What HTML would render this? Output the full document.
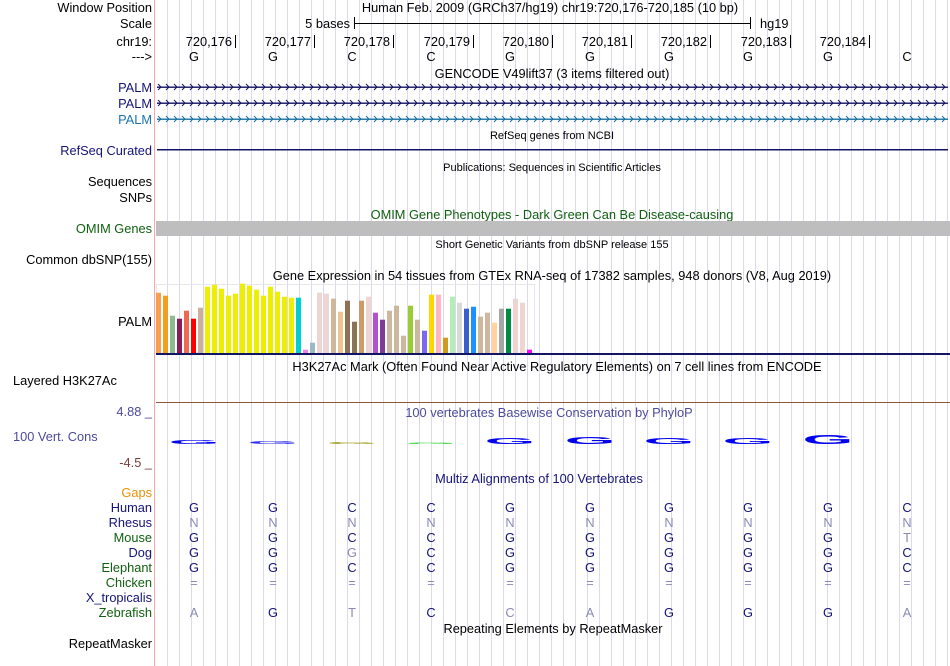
<!DOCTYPE html>
<html><head><meta charset="utf-8"><style>
html,body{margin:0;padding:0;background:#fff;width:950px;height:666px;overflow:hidden}
svg{display:block}
text{font-family:"Liberation Sans",sans-serif;font-size:12.8px}
.s{font-size:11px}
</style></head><body>
<svg width="950" height="666" xmlns="http://www.w3.org/2000/svg">
<defs>
<pattern id="grid" x="167" y="0" width="12" height="666" patternUnits="userSpaceOnUse">
<rect x="0" y="0" width="1" height="666" fill="#dcd8f2"/>
</pattern>
</defs>
<rect x="156" y="0" width="794" height="666" fill="url(#grid)"/>
<rect x="154" y="0" width="1" height="666" fill="#f8a8a8"/>

<g fill="#000" text-anchor="end">
<text x="152" y="12">Window Position</text>
<text x="152" y="28">Scale</text>
<text x="152" y="46">chr19:</text>
<text x="152" y="61">---&gt;</text>
</g>
<text x="550" y="12" text-anchor="middle">Human Feb. 2009 (GRCh37/hg19)   chr19:720,176-720,185 (10 bp)</text>
<text x="350" y="28" text-anchor="end">5 bases</text>
<rect x="354" y="17" width="1" height="12" fill="#000"/>
<rect x="354" y="23" width="396" height="1" fill="#000"/>
<rect x="750" y="17" width="1" height="12" fill="#000"/>
<text x="760" y="28">hg19</text>
<g text-anchor="end">
<text x="232" y="46">720,176</text><rect x="235" y="35" width="1" height="13"/>
<text x="311" y="46">720,177</text><rect x="314" y="35" width="1" height="13"/>
<text x="390" y="46">720,178</text><rect x="393" y="35" width="1" height="13"/>
<text x="470" y="46">720,179</text><rect x="473" y="35" width="1" height="13"/>
<text x="549" y="46">720,180</text><rect x="552" y="35" width="1" height="13"/>
<text x="628" y="46">720,181</text><rect x="631" y="35" width="1" height="13"/>
<text x="707" y="46">720,182</text><rect x="710" y="35" width="1" height="13"/>
<text x="787" y="46">720,183</text><rect x="790" y="35" width="1" height="13"/>
<text x="866" y="46">720,184</text><rect x="869" y="35" width="1" height="13"/>
</g>
<g text-anchor="middle">
<text x="194" y="61">G</text><text x="273" y="61">G</text><text x="352" y="61">C</text><text x="431" y="61">C</text><text x="510" y="61">G</text><text x="590" y="61">G</text><text x="669" y="61">G</text><text x="748" y="61">G</text><text x="828" y="61">G</text><text x="907" y="61">C</text>
</g>
<text x="552" y="78" text-anchor="middle">GENCODE V49lift37 (3 items filtered out)</text>

<text x="152" y="92" text-anchor="end" fill="#141478">PALM</text>
<text x="152" y="108" text-anchor="end" fill="#141478">PALM</text>
<text x="152" y="124" text-anchor="end" fill="#1a74b0">PALM</text>
<g id="palm"></g>

<text class="s" x="552" y="139" text-anchor="middle">RefSeq genes from NCBI</text>
<text x="152" y="155" text-anchor="end" fill="#141478">RefSeq Curated</text>
<rect x="157" y="149" width="791" height="1.5" fill="#141464"/>
<text class="s" x="552" y="171" text-anchor="middle">Publications: Sequences in Scientific Articles</text>
<text x="152" y="186" text-anchor="end">Sequences</text>
<text x="152" y="202" text-anchor="end">SNPs</text>
<text x="552" y="219" text-anchor="middle" fill="#106010">OMIM Gene Phenotypes - Dark Green Can Be Disease-causing</text>
<text x="152" y="233" text-anchor="end" fill="#106010">OMIM Genes</text>
<rect x="156" y="221" width="794" height="15" fill="#bebebe"/>
<text class="s" x="552" y="248" text-anchor="middle">Short Genetic Variants from dbSNP release 155</text>
<text x="152" y="264" text-anchor="end">Common dbSNP(155)</text>
<text x="552" y="280" text-anchor="middle">Gene Expression in 54 tissues from GTEx RNA-seq of 17382 samples, 948 donors (V8, Aug 2019)</text>
<text x="152" y="326" text-anchor="end">PALM</text>
<rect x="156.5" y="284.5" width="378" height="69" fill="none" stroke="#e6e6ec"/>
<g id="bars"></g>
<rect x="156" y="353" width="794" height="2" fill="#141464"/>

<text x="557" y="371" text-anchor="middle">H3K27Ac Mark (Often Found Near Active Regulatory Elements) on 7 cell lines from ENCODE</text>
<text x="13" y="385">Layered H3K27Ac</text>
<rect x="156" y="402" width="794" height="1" fill="#8b5a3c"/>

<text x="152" y="416" text-anchor="end" fill="#4b4b9b">4.88 _</text>
<text x="13" y="441" fill="#4b4b9b">100 Vert. Cons</text>
<text x="152" y="467" text-anchor="end" fill="#7b3c3c">-4.5 _</text>
<text x="549" y="417" text-anchor="middle" fill="#4b4b9b">100 vertebrates Basewise Conservation by PhyloP</text>
<g id="logos" text-anchor="middle" font-weight="bold"></g>

<text x="539" y="483" text-anchor="middle" fill="#141478">Multiz Alignments of 100 Vertebrates</text>
<g text-anchor="end">
<text x="152" y="497" fill="#e8900a">Gaps</text>
<text x="152" y="512" fill="#141478">Human</text>
<text x="152" y="527" fill="#141478">Rhesus</text>
<text x="152" y="542" fill="#106010">Mouse</text>
<text x="152" y="557" fill="#141478">Dog</text>
<text x="152" y="572" fill="#106010">Elephant</text>
<text x="152" y="587" fill="#106010">Chicken</text>
<text x="152" y="602" fill="#141478">X_tropicalis</text>
<text x="152" y="617" fill="#106010">Zebrafish</text>
<text x="152" y="648" fill="#000">RepeatMasker</text>
</g>
<g id="maf" text-anchor="middle"></g>
<text x="553" y="633" text-anchor="middle">Repeating Elements by RepeatMasker</text>
</svg>
<script>
var NS="http://www.w3.org/2000/svg";
function el(n,a,p){var e=document.createElementNS(NS,n);for(var k in a)e.setAttribute(k,a[k]);p.appendChild(e);return e;}
var pg=document.getElementById("palm");
[[87,"#141464"],[103,"#141464"],[119,"#1a6fa0"]].forEach(function(r){
 el("rect",{x:157,y:r[0]-0.5,width:791,height:1.4,fill:r[1]},pg);
 var d="";for(var x=158;x<946;x+=8){d+="M"+x+" "+(r[0]-3)+"L"+(x+3)+" "+r[0]+"L"+x+" "+(r[0]+3);}
 el("path",{d:d,fill:"none",stroke:r[1],"stroke-width":1},pg);
});
var bars=[[292.7,"#f4a050"],[295.7,"#f0a020"],[315.7,"#8fbc8f"],[318.7,"#8b1a5a"],[310.7,"#ee6a50"],[318.7,"#ff0000"],[307.7,"#cdb09a"],
[286.7,"#eeee00"],[284.7,"#eeee00"],[288.7,"#eeee00"],[295.7,"#eeee00"],[293.7,"#eeee00"],[283.7,"#eeee00"],[285.7,"#eeee00"],[289.7,"#eeee00"],[295.7,"#eeee00"],[286.7,"#eeee00"],[291.7,"#eeee00"],[296.7,"#eeee00"],[297.7,"#eeee00"],
[297.7,"#00ced1"],[349.7,"#ee82ee"],[342.7,"#9ab8c8"],[292.7,"#eed5d2"],[293.7,"#eed5d2"],[298.7,"#cdb79e"],[311.7,"#eec591"],[300.7,"#8b7355"],[321.7,"#8b7355"],[300.7,"#cd9b69"],[296.7,"#eed5d2"],
[312.7,"#b452cd"],[319.7,"#7d3c98"],[310.7,"#cdb79e"],[305.7,"#cdb79e"],[335.7,"#cdb79e"],[305.7,"#9acd32"],[319.7,"#cdb79e"],[330.7,"#7b68ee"],[294.7,"#ffd700"],[294.7,"#ffb6c1"],[337.7,"#cd9b1d"],
[296.7,"#b4eeb4"],[302.7,"#d9d9d9"],[308.7,"#3a5fcd"],[306.7,"#1e90ff"],[316.7,"#cdb79e"],[312.7,"#cdb79e"],[322.7,"#ffd39b"],[308.7,"#a6a6a6"],[308.7,"#008b45"],[298.7,"#eed5d2"],[302.7,"#eed5d2"],[349.7,"#ff00ff"]];
var g=document.getElementById("bars");
bars.forEach(function(b,i){el("rect",{x:156+i*7,y:b[0],width:5,height:353-b[0],fill:b[1]},g);});
var xs=[194,273,352,431,510,590,669,748,828,907];
var lg=document.getElementById("logos");
var lh=[[4,"#0000ee"],[3,"#3030ee"],[2,"#a0a020"],[1,"#30d030"],[6,"#0000ee"],[7,"#0000ee"],[6,"#0000ee"],[6,"#0000ee"],[9,"#0000ee"]];
lh.forEach(function(h,i){var t=el("text",{fill:h[1],x:0,y:0,"font-size":"12",transform:"translate("+xs[i]+",444) scale("+(46/9)+","+(h[0]/9)+")"},lg);t.textContent="G";});
var D="#141478",L="#8a8ab8";
var rows=[[512,"GGCCGGGGGC","DDDDDDDDDD"],[527,"NNNNNNNNNN","LLLLLLLLLL"],[542,"GGCCGGGGGT","DDDDDDDDDL"],[557,"GGGCGGGGGC","DDLDDDDDDD"],[572,"GGCCGGGGGC","DDDDDDDDDD"],[587,"==========","LLLLLLLLLL"],[617,"AGTCCAGGGA","LDLDLLDDDL"]];
var mg=document.getElementById("maf");
rows.forEach(function(r){for(var i=0;i<10;i++){var t=el("text",{x:xs[i],y:r[0],fill:r[2][i]=="D"?D:L},mg);t.textContent=r[1][i];}});
</script>
</body></html>
